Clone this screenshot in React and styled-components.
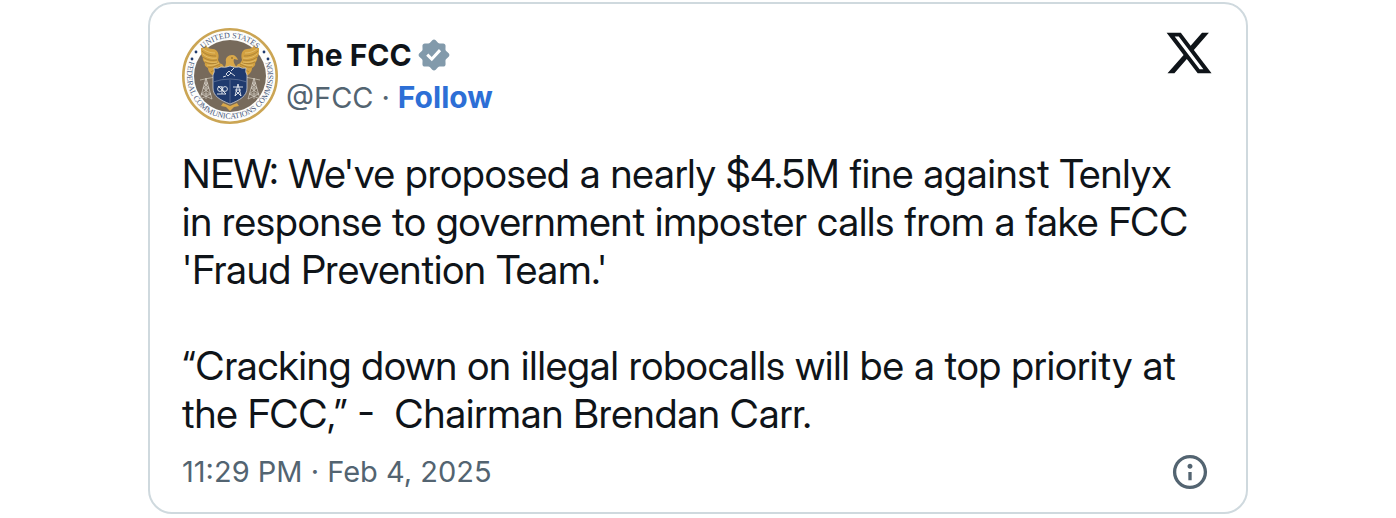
import React from "react";
import styled, { createGlobalStyle } from "styled-components";

const App = () => {
  return (
    <>
      <GlobalStyle />
      <Page>
        <Card>
          <Header>
            <Avatar href="#profile" aria-label="The FCC profile">
              <Seal />
            </Avatar>
            <Author>
              <Name href="#profile">
                The FCC
                <VerifiedBadge />
              </Name>
              <HandleRow>
                <Handle href="#profile">@FCC</Handle>
                <span>·</span>
                <Follow href="#follow">Follow</Follow>
              </HandleRow>
            </Author>
            <LogoLink href="#post" aria-label="View on X">
              <XLogo />
            </LogoLink>
          </Header>
          <Text>
            {
              "NEW: We've proposed a nearly $4.5M fine against Tenlyx in response to government imposter calls from a fake FCC 'Fraud Prevention Team.'\n\n“Cracking down on illegal robocalls will be a top priority at the FCC,” -  Chairman Brendan Carr."
            }
          </Text>
          <Footer>
            <Time href="#post">11:29 PM · Feb 4, 2025</Time>
            <InfoLink href="#info" aria-label="Ads info and privacy">
              <InfoIcon />
            </InfoLink>
          </Footer>
        </Card>
      </Page>
    </>
  );
};

export default App;

const VerifiedBadge = () => (
  <Badge viewBox="0 0 22 22" role="img" aria-label="Verified">
    <path
      fillRule="evenodd"
      clipRule="evenodd"
      d="M12.05 2.056c-.568-.608-1.532-.608-2.1 0l-1.393 1.49c-.284.303-.685.47-1.1.456L5.42 3.932c-.832-.028-1.514.654-1.486 1.486l.069 2.039c.014.415-.152.816-.456 1.1l-1.49 1.392c-.608.568-.608 1.533 0 2.101l1.49 1.393c.304.284.47.684.456 1.1l-.07 2.038c-.027.831.655 1.513 1.487 1.486l2.038-.069c.415-.014.816.152 1.1.456l1.392 1.49c.569.609 1.533.609 2.102 0l1.393-1.49c.283-.304.684-.47 1.099-.456l2.038.069c.832.028 1.515-.655 1.486-1.486L18 14.542c-.013-.415.153-.815.456-1.099l1.49-1.393c.608-.568.608-1.533 0-2.101l-1.49-1.393c-.303-.283-.47-.684-.456-1.1l.068-2.038c.029-.832-.654-1.514-1.486-1.486l-2.038.07c-.415.013-.816-.153-1.1-.456zm-5.817 9.367l3.429 3.428 5.683-6.206-1.347-1.247-4.4 4.795-2.072-2.072z"
    />
  </Badge>
);

const XLogo = () => (
  <svg width="50" height="50" viewBox="0 0 24 24" fill="#0f1419">
    <path d="M18.244 2.25h3.308l-7.227 8.26 8.502 11.24H16.17l-5.214-6.817L4.99 21.75H1.68l7.73-8.835L1.254 2.25H8.08l4.713 6.231zm-1.161 17.52h1.833L7.084 4.126H5.117z" />
  </svg>
);

const InfoIcon = () => (
  <svg width="40" height="40" viewBox="0 0 24 24" fill="#536471">
    <path d="M13.5 8.5c0 .83-.67 1.5-1.5 1.5s-1.5-.67-1.5-1.5S11.17 7 12 7s1.5.67 1.5 1.5zM13 17v-5h-2v5h2zm-1 5.25c5.66 0 10.25-4.59 10.25-10.25S17.66 1.75 12 1.75 1.75 6.34 1.75 12 6.34 22.25 12 22.25zM20.25 12c0 4.56-3.69 8.25-8.25 8.25S3.75 16.56 3.75 12 7.44 3.75 12 3.75s8.25 3.69 8.25 8.25z" />
  </svg>
);

const Tower = ({ flip }) => (
  <g
    transform={flip ? "translate(96 0) scale(-1 1)" : undefined}
    fill="none"
    stroke="#d5d0c5"
    strokeWidth="0.7"
  >
    <path d="M24 50L18 71M24 50L30 71M24 50V71M22 55h4M21 60h6M19 66h10M22 55l5 5-8 6 11 5M26 55l-5 5 8 6-11 5" />
  </g>
);

const Wing = ({ flip }) => (
  <g transform={flip ? "translate(96 0) scale(-1 1)" : undefined}>
    <path
      fill="#d3a141"
      d="M24 17c-1 2-3 3-5 3 0 4 0 7 2 10-1 1 1 4 2 5-1 2 1 4 3 5 0 2 1 5 4 7l3 1 2-6 8-2-3-4c-2 0-3-2-4-4 2-6-1-11-5-11-3 0-6-1-7-4z"
    />
    <path
      fill="none"
      stroke="#96702d"
      strokeWidth="0.6"
      d="M20 23c3 3 7 5 14 5M21 29c4 3 8 4 14 3M23 34c4 2 8 2 13 1M26 39c4 1 8-1 12-3M29 44l9-6"
    />
    <path
      fill="none"
      stroke="#efd083"
      strokeWidth="0.6"
      d="M21 21c4 3 8 4 12 4M21 26c3 3 8 5 14 4M22 32c4 2 8 3 13 2M25 37c4 1 8 0 12-2"
    />
  </g>
);

const Seal = () => (
  <svg width="96" height="96" viewBox="0 0 96 96">
    <defs>
      <path id="sealTop" d="M10 48a38 38 0 0 1 76 0" />
      <path id="sealBottom" d="M8 32a43 43 0 1 0 80 0" />
    </defs>
    <circle cx="48" cy="48" r="46.7" fill="#fdfdfb" stroke="#cba554" strokeWidth="2.6" />
    <circle cx="48" cy="48" r="36" fill="#776a5b" />
    <Tower />
    <Tower flip />
    <Wing />
    <Wing flip />
    <path
      fill="#d9a84a"
      d="M41 41c2-2 3-4 3-7-1-4 2-7 6-7 3 0 5 2 6 5l-4-1c-1 2 0 4 1 6l3 4z"
    />
    <circle cx="50" cy="30" r="0.7" fill="#5a451f" />
    <path fill="#d9a84a" d="M41 75l7 3 7-3 2 3-5 1-4 4-4-4-5-1z" />
    <path fill="none" stroke="#cfc8b8" strokeWidth="0.7" d="M18 52L48 46l30 6" />
    <path
      fill="#1f3a6e"
      stroke="#c9cdd6"
      strokeWidth="0.8"
      d="M32 40q4 1 7-1 5 1 9-1 4 2 9 1 3 2 7 1-1 4 1 7v13c0 8-7 12-17 16-10-4-17-8-17-16V47q2-3 1-7z"
    />
    <path stroke="#6c7d9f" strokeWidth="0.7" fill="none" d="M31 54q17-6 34 0M48 52v23" />
    <g stroke="#e9ecf1" strokeWidth="0.9" fill="none">
      <path d="M44 46l3-3 2 2-3 3zM49 43l3-3M44 48l-3 1M49 45l4 3" />
      <circle cx="38" cy="61" r="2.4" />
      <circle cx="43" cy="61" r="2.4" />
      <path d="M35 66h9M40 58v8M36 58l8 8" />
      <path d="M51 59h10M53 62h6M56 56l-3 12M56 56l3 12M53 68l5-5M59 68l-5-5" />
    </g>
    <g fill="#1f3a6e">
      <circle cx="10" cy="31" r="1.4" />
      <circle cx="14" cy="24" r="1.4" />
      <circle cx="86" cy="31" r="1.4" />
      <circle cx="82" cy="24" r="1.4" />
    </g>
    <SealText>
      <textPath href="#sealTop" startOffset="50%" textAnchor="middle">
        UNITED STATES
      </textPath>
    </SealText>
    <SealText>
      <textPath href="#sealBottom" startOffset="50%" textAnchor="middle">
        FEDERAL COMMUNICATIONS COMMISSION
      </textPath>
    </SealText>
  </svg>
);

const GlobalStyle = createGlobalStyle`
  * {
    box-sizing: border-box;
  }

  body {
    margin: 0;
    background: #fff;
    color: #0f1419;
    font-family: Inter, "Liberation Sans", sans-serif;
  }

  a {
    color: inherit;
    text-decoration: none;
  }

  svg {
    display: block;
    flex-shrink: 0;
  }
`;

const Page = styled.main`
  padding: 2px 24px 4px;
`;

const Card = styled.article`
  max-width: 1100px;
  margin: 0 auto;
  padding: 24px 32px 20px;
  border: 2px solid #cfd9de;
  border-radius: 24px;
  background: #fff;
`;

const Header = styled.header`
  display: flex;
  align-items: flex-start;
`;

const Avatar = styled.a`
  border-radius: 50%;
`;

const Author = styled.div`
  flex: 1;
  padding: 6px 0 0 8px;
  line-height: 42px;
`;

const Name = styled.a`
  display: flex;
  align-items: center;
  gap: 4px;
  font-size: 30px;
  font-weight: 700;
`;

const Badge = styled.svg`
  width: 36px;
  height: 36px;
  fill: #829aab;
`;

const HandleRow = styled.div`
  display: flex;
  align-items: baseline;
  gap: 8px;
  color: #536471;
  font-size: 29px;
`;

const Handle = styled.a`
  color: #536471;
`;

const Follow = styled.a`
  color: #2d6fd6;
  font-size: 30px;
  font-weight: 700;
`;

const LogoLink = styled.a``;

const Text = styled.p`
  margin: 26px 0 0;
  padding-right: 8px;
  font-family: "Inter Display", Inter, "Liberation Sans", sans-serif;
  font-size: 40px;
  line-height: 48px;
  white-space: pre-wrap;
`;

const Footer = styled.footer`
  display: flex;
  align-items: center;
  justify-content: space-between;
  margin-top: 14px;
  color: #536471;
  font-size: 29px;
  line-height: 40px;
`;

const Time = styled.a``;

const InfoLink = styled.a`
  padding-right: 4px;
`;

const SealText = styled.text`
  fill: #4a5a7c;
  font-family: "Liberation Serif", serif;
  font-size: 8px;
`;
